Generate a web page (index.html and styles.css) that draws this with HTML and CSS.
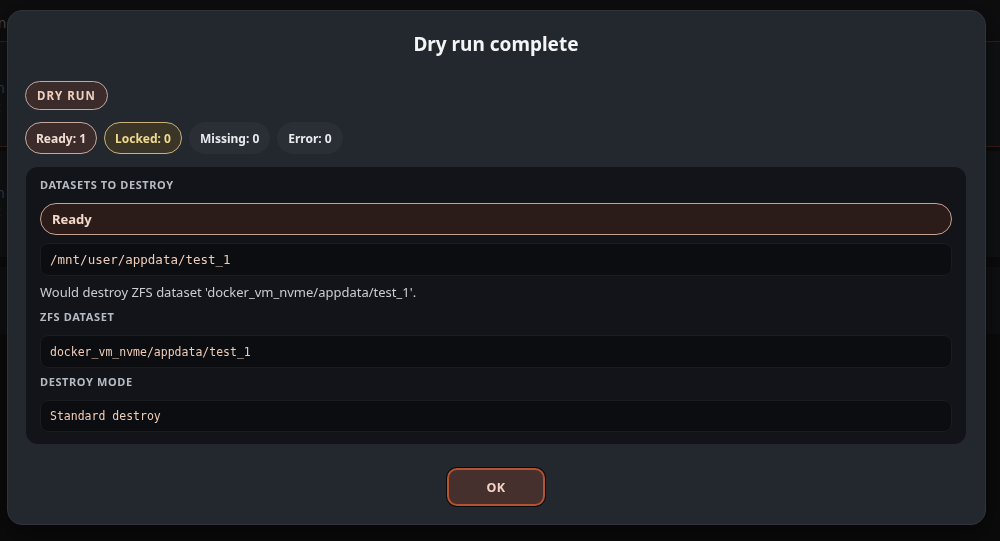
FILE: index.html
```html
<!DOCTYPE html>
<html lang="en">
<head>
  <meta charset="UTF-8"/>
  <meta name="viewport" content="width=device-width, initial-scale=1.0"/>
  <title>Dry run complete</title>
  <link rel="stylesheet" href="styles.css">
</head>
<body>
  <!-- Page behind the dialog -->
  <div class="page">
    <div class="bg-head"><span class="bg-text">Sync</span></div>
    <div class="bg-card">
      <div class="bg-line">Item</div>
      <div class="bg-line small">Use c</div>
    </div>
    <div class="bg-card second">
      <div class="bg-line">Item</div>
      <div class="bg-line small">Use c</div>
    </div>
    <div class="bg-card third"></div>
  </div>

  <!-- Dialog -->
  <div class="overlay">
    <div class="modal">
      <h2 class="modal-title">Dry run complete</h2>

      <div class="badges">
        <span class="badge">DRY RUN</span>
      </div>

      <div class="chips">
        <span class="chip ready">Ready: 1</span>
        <span class="chip locked">Locked: 0</span>
        <span class="chip">Missing: 0</span>
        <span class="chip">Error: 0</span>
      </div>

      <div class="panel">
        <div class="label">Datasets to destroy</div>
        <div class="status-row">Ready</div>
        <div class="code path">/mnt/user/appdata/test_1</div>
        <div class="note">Would destroy ZFS dataset 'docker_vm_nvme/appdata/test_1'.</div>
        <div class="label spaced">ZFS dataset</div>
        <div class="code">docker_vm_nvme/appdata/test_1</div>
        <div class="label spaced last">Destroy mode</div>
        <div class="code">Standard destroy</div>
      </div>

      <div class="actions">
        <button class="btn-ok">OK</button>
      </div>
    </div>
  </div>
</body>
</html>
```

FILE: styles.css
```css
body {
  margin: 0;
  background: #0f0f10;
  font-family: "Noto Sans", "Open Sans", sans-serif;
  color: #e6e8ec;
  height: 541px;
  overflow: hidden;
}

/* background page */
.page {
  display: flex;
  flex-direction: column;
}
.bg-head {
  height: 42px;
  background: #121214;
  border-bottom: 1px solid #4b2a20;
  display: flex;
  align-items: center;
  padding-top: 4px;
  box-sizing: border-box;
}
.bg-text {
  color: #5c5f66;
  font-size: 14px;
  margin-left: -17px;
}
.bg-card {
  height: 105px;
  background: #16171b;
  border-bottom: 1px solid #4b2a20;
  margin-bottom: 4px;
  padding-top: 36px;
  box-sizing: border-box;
}
.bg-card.second {
  height: 106px;
  border-bottom: none;
  margin-bottom: 10px;
  padding-top: 32px;
}
.bg-card.third {
  height: 67px;
  border-bottom: none;
  background: #141518;
}
.bg-line {
  color: #4e5158;
  font-size: 14px;
  margin-left: -26px;
  white-space: nowrap;
}
.bg-line.small {
  font-size: 13px;
  margin-left: -32px;
}

/* dialog */
.overlay {
  position: fixed;
  inset: 0;
  background: rgba(0, 0, 0, 0.25);
  padding: 10px 14px 0 7px;
  box-sizing: border-box;
}
.modal {
  background: #23272e;
  border: 1px solid #2f343c;
  border-radius: 15px;
  padding: 20px 19px 18px 18px;
  box-shadow: 0 10px 30px rgba(0, 0, 0, 0.5);
}
.modal-title {
  margin: 0;
  text-align: center;
  font-size: 19px;
  line-height: 26px;
  font-weight: 700;
  color: #f4f5f7;
}

.badges {
  margin-top: 24px;
  display: flex;
}
.badge {
  height: 29px;
  box-sizing: border-box;
  padding: 0 11px;
  margin-left: -1px;
  display: inline-flex;
  align-items: center;
  border-radius: 15px;
  background: #3b2b2b;
  border: 1px solid #c7a89b;
  color: #f0cfc0;
  font-size: 11.5px;
  font-weight: 700;
  letter-spacing: 1px;
}

.chips {
  margin-top: 12px;
  display: flex;
  gap: 7px;
  margin-left: -1px;
}
.chip {
  height: 32px;
  box-sizing: border-box;
  padding: 0 10px;
  display: inline-flex;
  align-items: center;
  border-radius: 16px;
  background: #2a2e35;
  border: 1px solid transparent;
  color: #e8eaee;
  font-size: 12px;
  font-weight: 700;
}
.chip.ready {
  background: #3b2b2b;
  border-color: #c7a89b;
  color: #f1ddd3;
}
.chip.locked {
  background: #3a3527;
  border-color: #c8b17a;
  color: #f1d98f;
}

.panel {
  margin-top: 13px;
  background: #121419;
  border-radius: 12px;
  padding: 11px 14px 12px;
  display: flex;
  flex-direction: column;
}
.label {
  font-size: 11px;
  line-height: 14px;
  font-weight: 700;
  letter-spacing: 0.6px;
  text-transform: uppercase;
  color: #b6bbc3;
}
.label.spaced {
  margin-top: 9px;
}
.label.last {
  margin-top: 7px;
}
.status-row {
  margin-top: 11px;
  height: 32px;
  box-sizing: border-box;
  border-radius: 16px;
  background: #2b1b19;
  border: 1px solid #c9a191;
  padding: 0 11px;
  display: flex;
  align-items: center;
  font-size: 13px;
  font-weight: 700;
  color: #f4d8c9;
}
.code {
  margin-top: 11px;
  height: 33px;
  box-sizing: border-box;
  border-radius: 8px;
  background: #0c0d11;
  border: 1px solid #1a1c21;
  padding: 0 9px;
  display: flex;
  align-items: center;
  font-family: "DejaVu Sans Mono", "Liberation Mono", monospace;
  font-size: 11.5px;
  color: #efcdb8;
}
.code:last-child {
  height: 32px;
}
.code.path {
  margin-top: 8px;
  font-size: 12.5px;
}
.note {
  margin-top: 7px;
  font-size: 13px;
  line-height: 18px;
  color: #c9cdd3;
}

.actions {
  margin-top: 24px;
  display: flex;
  justify-content: center;
}
.btn-ok {
  width: 98px;
  height: 38px;
  border-radius: 10px;
  background: #46302e;
  border: 2px solid #b4532f;
  box-shadow: 0 0 0 1px #0b0b0c;
  color: #f3d2c2;
  font-family: inherit;
  font-size: 12.5px;
  font-weight: 700;
  letter-spacing: 0.5px;
  cursor: pointer;
}
```
